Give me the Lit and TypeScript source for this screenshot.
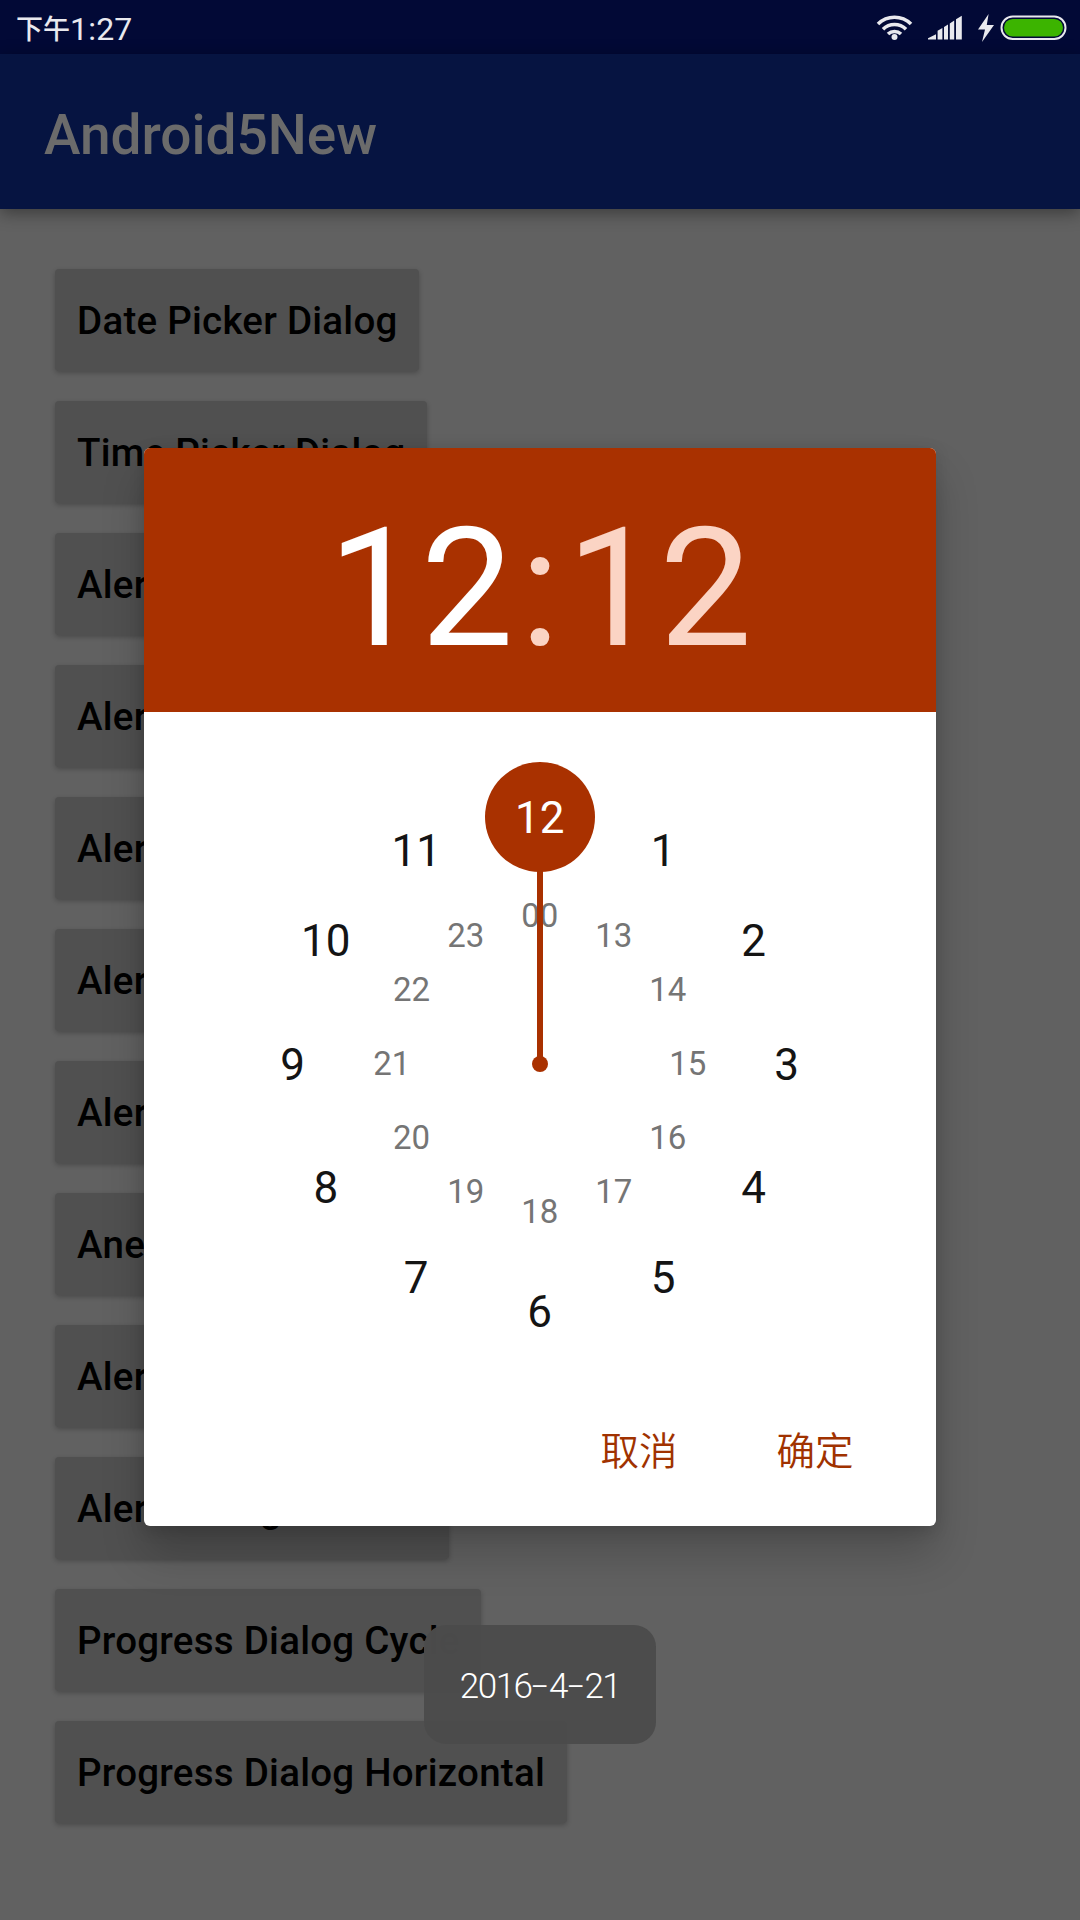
import { LitElement, html, svg, css } from "lit";
import { customElement } from "lit/decorators.js";

const ACTIONS = [
  "Date Picker Dialog",
  "Time Picker Dialog",
  "Alert Dialog One",
  "Alert Dialog Two",
  "Alert Dialog List",
  "Alert Dialog Radio",
  "Alert Dialog Check",
  "Anew Dialog",
  "Alert Dialog View",
  "Alert Dialog Custom",
  "Progress Dialog Cycle",
  "Progress Dialog Horizontal",
];

const OUTER = ["12", "1", "2", "3", "4", "5", "6", "7", "8", "9", "10", "11"];
const INNER = ["00", "13", "14", "15", "16", "17", "18", "19", "20", "21", "22", "23"];

@customElement("status-bar")
class StatusBar extends LitElement {
  static styles = css`
    :host {
      display: flex;
      align-items: center;
      justify-content: space-between;
      height: 54px;
      padding: 0 13px 0 16px;
      box-sizing: border-box;
      background: #020936;
      color: #e9e9ee;
      font: 400 32px/58px Roboto, "Noto Sans CJK SC", sans-serif;
    }
    .time { display: flex; align-items: flex-start; height: 54px; }
    .cjk { font: 500 27px/56px "Noto Sans CJK SC", sans-serif; }
    .clock { letter-spacing: 0.2px; }
    svg { display: block; }
  `;
  render() {
    return html`
      <div class="time"><span class="cjk">下午</span><span class="clock">1:27</span></div>
      <svg width="192" height="54" viewBox="875 0 192 54">
        <g fill="none" stroke="#e9e9ee" stroke-width="3.6">
          <path d="M878 24 a23.500 23.500 0 0 1 33 0" />
          <path d="M883 29.200 a16.500 16.500 0 0 1 23 0" />
          <path d="M888 34 a9.500 9.500 0 0 1 13 0" />
        </g>
        <circle cx="894.5" cy="37" r="3" fill="#e9e9ee" />
        <path fill="#e9e9ee" d="M928 39.600v-1.400l8-4v5.400zM937.600 39.600v-8.800l4.800-2.800v11.600zM944 39.600v-12.600l4-2.600v15.200zM949.800 39.600v-16.200l4.400-2.800v19zM956 39.600v-20.400l5.800-3.400v23.800z" />
        <path fill="#e9e9ee" d="M988.600 14 L978 29.400 L985 29.400 L982 42 L994 25 L986.800 25 Z" />
        <rect x="1001.500" y="16.500" width="64" height="22.500" rx="11.200" fill="#020936" stroke="#e9e9ee" stroke-width="2" />
        <rect x="1004" y="19" width="59" height="17.500" rx="8.700" fill="#3cb400" />
      </svg>
    `;
  }
}

@customElement("clock-face")
class ClockFace extends LitElement {
  static styles = css`
    :host { display: block; height: 660px; }
    svg { display: block; }
    text { font-family: Roboto, sans-serif; text-anchor: middle; }
    .outer { font-size: 44px; fill: #141414; }
    .inner { font-size: 33px; fill: #757575; }
    .selected { fill: #ffffff; }
    .hand { fill: #a93100; }
  `;
  private ring(labels: string[], radius: number, drop: number, name: string) {
    return labels.map((label, i) => {
      const a = (i * Math.PI) / 6;
      const chosen = label === "12" ? " selected" : "";
      return svg`<text class=${name + chosen} x=${395.7 + radius * Math.sin(a)} y=${352 - radius * Math.cos(a) + drop}>${label}</text>`;
    });
  }
  render() {
    return html`<svg width="792" height="660" viewBox="0 0 792 660">
      ${this.ring(INNER, 148, 11.2, "inner")}
      <rect class="hand" x="393" y="150" width="6" height="202" />
      <circle class="hand" cx="396" cy="352" r="8" />
      <circle class="hand" cx="396" cy="105" r="55" />
      ${this.ring(OUTER, 247, 15.5, "outer")}
    </svg>`;
  }
}

@customElement("time-dialog")
class TimeDialog extends LitElement {
  static styles = css`
    :host {
      display: flex;
      flex-direction: column;
      width: 792px;
      height: 1078px;
      border-radius: 6px;
      overflow: hidden;
      background: #ffffff;
      box-shadow: 0 28px 44px rgba(0, 0, 0, 0.2), 0 4px 16px rgba(0, 0, 0, 0.14);
    }
    .head {
      display: flex;
      justify-content: center;
      height: 264px;
      background: #a93100;
      color: #fbd4c4;
      font: 400 165px/282px Roboto, sans-serif;
    }
    .hour { color: #ffffff; }
    .colon { padding: 0 6.500px; }
    .actions {
      display: flex;
      justify-content: flex-end;
      gap: 99px;
      padding: 54px 82.5px 0 0;
      color: #a03200;
      font: 350 38.5px/44px "Noto Sans CJK SC", sans-serif;
    }
  `;
  render() {
    return html`
      <div class="head"><span class="hour">12</span><span class="colon">:</span><span>12</span></div>
      <clock-face></clock-face>
      <div class="actions"><span>取消</span><span>确定</span></div>
    `;
  }
}

@customElement("app-root")
class AppRoot extends LitElement {
  static styles = css`
    :host {
      display: block;
      position: relative;
      width: 1080px;
      height: 1920px;
      overflow: hidden;
      background: #616161;
      font-family: Roboto, sans-serif;
    }
    .bar {
      height: 155px;
      box-sizing: border-box;
      padding: 0 44px;
      background: #061441;
      color: #6b6b6b;
      font: 500 55px/163px Roboto, sans-serif;
      box-shadow: 0 4px 16px rgba(0, 0, 0, 0.4);
    }
    .list {
      display: flex;
      flex-direction: column;
      align-items: flex-start;
      gap: 30px;
      padding: 60px 55px 0;
    }
    .button {
      height: 102px;
      box-sizing: border-box;
      padding: 0 21.5px 0 22px;
      border-radius: 4px;
      background: #505050;
      color: #000000;
      font: 500 38.5px/104px Roboto, sans-serif;
      letter-spacing: 0.25px;
      box-shadow: 0 2px 5px rgba(0, 0, 0, 0.24);
      white-space: nowrap;
    }
    .dialog { position: absolute; left: 144px; top: 448px; }
    .toast {
      position: absolute;
      left: 424px;
      top: 1625px;
      width: 232px;
      height: 119px;
      border-radius: 22px;
      background: rgba(75, 75, 75, 0.98);
      color: #ffffff;
      display: flex;
      justify-content: center;
      font: 350 35px/124px Roboto, sans-serif;
      letter-spacing: -1.500px;
    }
    .dash {
      width: 17.500px;
      text-align: center;
      letter-spacing: 0;
      transform: translateY(-1px) scaleX(1.65);
    }
  `;
  render() {
    return html`
      <status-bar></status-bar>
      <div class="bar">Android5New</div>
      <div class="list">${ACTIONS.map((a) => html`<div class="button">${a}</div>`)}</div>
      <time-dialog class="dialog"></time-dialog>
      <div class="toast"><span>2016</span><span class="dash">-</span><span>4</span><span class="dash">-</span><span>21</span></div>
    `;
  }
}
